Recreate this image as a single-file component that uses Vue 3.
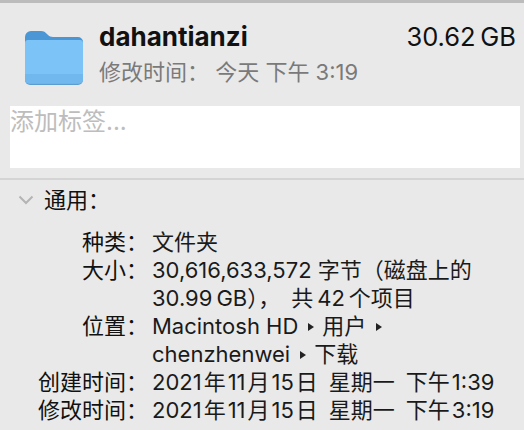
<script setup>
const rows = [
  { label: '种类：', lines: [['文件夹']] },
  { label: '大小：', lines: [['30,616,633,572 字节（磁盘上的'], ['30.99\u2009GB），\u2002共\u200942\u2009个项目']] },
  { label: '位置：', lines: [['Macintosh HD', '用户', ''], ['chenzhenwei', '下载']] },
  { label: '创建时间：', lines: [['2021\u200a年\u200a11\u200a月\u200a15\u200a日\u2002星期一\u2002下午\u200a1:39']] },
  { label: '修改时间：', lines: [['2021\u200a年\u200a11\u200a月\u200a15\u200a日\u2002星期一\u2002下午\u200a3:19']] },
]
</script>

<template>
  <div class="panel">
    <div class="topline"></div>
    <header class="head">
      <svg class="folder" viewBox="0 0 58 54" width="58" height="54">
        <path d="M0 6a6 6 0 0 1 6-6h10c3 0 4 1 6 3l1 1c1 1 3 2 5 2h25a5 5 0 0 1 5 5v12H0z" fill="#4b97d6"/>
        <path d="M0 12a3 3 0 0 1 3-3h52a3 3 0 0 1 3 3v37a5 5 0 0 1-5 5H5a5 5 0 0 1-5-5z" fill="#5c9dd0"/>
        <path d="M0 12a3 3 0 0 1 3-3h52a3 3 0 0 1 3 3v36a4.500 4.500 0 0 1-4.500 4.500h-49A4.500 4.500 0 0 1 0 48z" fill="#7cc3f7"/>
        <path d="M0 43h58v5a4.500 4.500 0 0 1-4.500 4.500h-49A4.500 4.500 0 0 1 0 48z" fill="#70b8ee"/>
      </svg>
      <div class="titles">
        <div class="name-row">
          <span class="name">dahantianzi</span>
          <span class="size">30.62&#8201;GB</span>
        </div>
        <div class="modified">修改时间： 今天 下午 3:19</div>
      </div>
    </header>
    <div class="tags">添加标签...</div>
    <div class="divider"></div>
    <div class="section">
      <svg class="chev" viewBox="0 0 16 10" width="16" height="10">
        <path d="M1.500 1.500 8 8l6.500-6.500" fill="none" stroke="#b4b4b4" stroke-width="2"/>
      </svg>
      <span>通用：</span>
    </div>
    <div class="info">
      <template v-for="r in rows" :key="r.label">
        <div class="label">{{ r.label }}</div>
        <div class="value">
          <div v-for="(l, i) in r.lines" :key="i" class="line">
            <template v-for="(seg, j) in l" :key="j">
              <i v-if="j > 0" class="arrow"></i>{{ seg }}
            </template>
          </div>
        </div>
      </template>
    </div>
  </div>
</template>

<style scoped>
.panel {
  width: 524px;
  height: 430px;
  overflow: hidden;
  background: #e9e9e9;
  color: #111;
  font-family: Inter, "Noto Sans CJK SC", sans-serif;
  font-size: 22px;
}
.topline {
  height: 3px;
  background: #bcbcbc;
}
.head {
  display: flex;
  gap: 16px;
  padding: 28px 8px 0 25px;
  height: 75px;
}
.folder {
  flex: none;
}
.titles {
  flex: 1;
  margin-top: -10px;
}
.name-row {
  display: flex;
  justify-content: space-between;
  align-items: baseline;
  line-height: 32px;
}
.name {
  font-size: 26px;
  font-weight: 700;
}
.size {
  font-size: 25.5px;
}
.modified {
  margin-top: 4px;
  color: #7a7a7a;
  line-height: 30px;
}
.tags {
  margin: 0 4px 0 10px;
  height: 62px;
  background: #fff;
  color: #bdbdbd;
  font-size: 24px;
  line-height: 32px;
}
.divider {
  height: 2px;
  margin-top: 10px;
  background: #d4d4d4;
}
.section {
  display: flex;
  align-items: center;
  gap: 10px;
  padding-left: 18px;
  height: 40px;
  line-height: 40px;
}
.info {
  display: grid;
  grid-template-columns: 148px 1fr;
  column-gap: 4px;
  margin-top: 8px;
  line-height: 28px;
}
.label {
  text-align: right;
  white-space: nowrap;
}
.value {
  color: #1a1a1a;
}
.line {
  white-space: pre;
}
.arrow {
  display: inline-block;
  width: 0;
  height: 0;
  margin: 0 8px 2px 10px;
  border-left: 6px solid #222;
  border-top: 4px solid transparent;
  border-bottom: 4px solid transparent;
  vertical-align: middle;
}
</style>
